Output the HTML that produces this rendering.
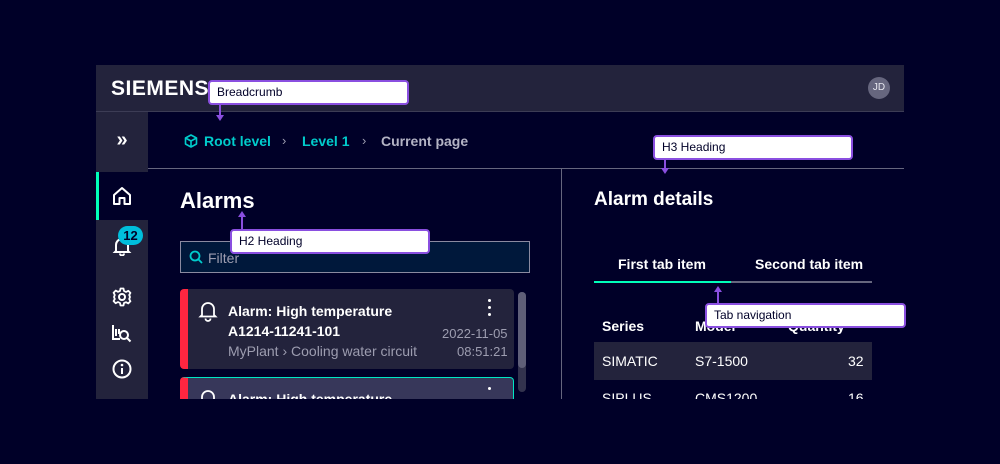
<!DOCTYPE html>
<html><head><meta charset="utf-8"><style>
*{margin:0;padding:0;box-sizing:border-box}
body{width:1000px;height:464px;background:#000028;font-family:"Liberation Sans",sans-serif;position:relative;overflow:hidden;color:#fff}
.a{position:absolute}
.hdr{left:96px;top:65px;width:808px;height:47px;background:#23233c;border-bottom:1px solid #3c3c55}
.side{left:96px;top:112px;width:52px;height:287px;background:#23233c}
.main{left:148px;top:112px;width:756px;height:287px;background:#000028;overflow:hidden}
.tip{background:#fff;color:#000028;border:2px solid #8a4fe0;border-radius:4px;font-size:12px;padding:0 7px;line-height:21px;height:25px}
.arr{width:2px;background:#8a4fe0}
.t{font-size:14px}
svg{display:block}
</style></head><body>
<div class="a hdr">
 <div class="a" style="left:15px;top:12px;font-size:21px;font-weight:bold;letter-spacing:0.5px">SIEMENS</div>
 <div class="a" style="left:772px;top:12px;width:22px;height:22px;border-radius:50%;background:#66667e;font-size:10px;text-align:center;line-height:22px;color:#e8e8f0">JD</div>
</div>
<div class="a side">
 <div class="a" style="left:0;top:0;width:52px;height:57px;color:#fff;font-size:20px;text-align:center;line-height:56px;font-weight:bold">»</div>
 <div class="a" style="left:0;top:60px;width:52px;height:48px;background:#000028"><div class="a" style="left:0;top:0;width:3px;height:48px;background:#00ffb9"></div>
  <svg class="a" style="left:16px;top:14px" width="20" height="20" viewBox="0 0 20 20"><path d="M2 9 L10 2 L18 9 V18 H12.5 V12 H7.5 V18 H2 Z" fill="none" stroke="#fff" stroke-width="2" stroke-linejoin="round"/></svg></div>
 <svg class="a" style="left:16px;top:124px" width="20" height="20" viewBox="0 0 20 20"><path d="M4 15 V9 a6 6 0 0 1 12 0 V15 L17 16 H3 Z M8 17.5 a2 2 0 0 0 4 0" fill="none" stroke="#fff" stroke-width="2"/></svg>
 <div class="a" style="left:22px;top:114px;width:25px;height:19px;border-radius:10px;background:#00bedc;color:#000028;font-size:13px;font-weight:bold;text-align:center;line-height:19px">12</div>
 <svg class="a" style="left:16px;top:175px" width="20" height="20" viewBox="0 0 20 20"><circle cx="10" cy="10" r="3" fill="none" stroke="#fff" stroke-width="2"/><path d="M8.5 1.5h3l.5 2.5 2 1 2.3-1.2 2.1 2.1L17.2 8l.8 2-.8 2 1.2 2.3-2.1 2.1L14 15.2l-2 .8-.5 2.5h-3L8 16l-2-1-2.3 1.2-2.1-2.1L2.8 12 2 10l.8-2-1.2-2.3 2.1-2.1L6 4.8l2-.8z" fill="none" stroke="#fff" stroke-width="1.8" stroke-linejoin="round"/></svg>
 <svg class="a" style="left:16px;top:211px" width="20" height="20" viewBox="0 0 20 20"><path d="M1 2v14h7M4 6v7M7 6v5" stroke="#fff" stroke-width="2" fill="none"/><circle cx="12" cy="12" r="4" fill="none" stroke="#fff" stroke-width="2"/><path d="M15 15l3.5 3.5" stroke="#fff" stroke-width="2"/></svg>
 <svg class="a" style="left:16px;top:247px" width="20" height="20" viewBox="0 0 20 20"><circle cx="10" cy="10" r="8.5" fill="none" stroke="#fff" stroke-width="2"/><path d="M10 9v6" stroke="#fff" stroke-width="2"/><circle cx="10" cy="6" r="1.3" fill="#fff"/></svg>
</div>
<div class="a main">
 <svg class="a" style="left:36px;top:22px" width="14" height="14" viewBox="0 0 14 14"><path d="M7 1l5.5 3v6L7 13 1.5 10V4z M1.5 4L7 7l5.5-3 M7 7v6" fill="none" stroke="#00cccc" stroke-width="1.6" stroke-linejoin="round"/></svg>
 <div class="a t" style="left:56px;top:21px;color:#00cccc;font-weight:bold">Root level</div>
 <div class="a" style="left:134px;top:21px;color:#9d9db0;font-size:13px">›</div>
 <div class="a t" style="left:154px;top:21px;color:#00cccc;font-weight:bold">Level 1</div>
 <div class="a" style="left:214px;top:21px;color:#9d9db0;font-size:13px">›</div>
 <div class="a t" style="left:233px;top:21px;color:#b3b3c4;font-weight:bold">Current page</div>
 <div class="a" style="left:0;top:56px;width:756px;height:1px;background:#66667e"></div>
 <div class="a" style="left:413px;top:57px;width:1px;height:230px;background:#66667e"></div>
 <div class="a" style="left:32px;top:76px;font-size:22px;font-weight:bold">Alarms</div>
 <div class="a" style="left:32px;top:129px;width:350px;height:32px;background:#00183b;border:1px solid #8a8aa0"></div>
 <svg class="a" style="left:41px;top:138px" width="14" height="14" viewBox="0 0 14 14"><circle cx="6" cy="6" r="4.5" fill="none" stroke="#00cccc" stroke-width="1.8"/><path d="M9.3 9.3L13 13" stroke="#00cccc" stroke-width="1.8"/></svg>
 <div class="a t" style="left:60px;top:138px;color:#9d9db0">Filter</div>
 <div class="a" style="left:32px;top:177px;width:334px;height:80px;background:#23233c;border-radius:4px;border-left:8px solid #ff2640"></div>
 <svg class="a" style="left:50px;top:188px" width="20" height="22" viewBox="0 0 20 22"><path d="M4 15V9a6 6 0 0 1 12 0v6l1.5 1.5h-15z M7.5 18.5a2.5 2.5 0 0 0 5 0" fill="none" stroke="#fff" stroke-width="1.8"/></svg>
 <div class="a t" style="left:80px;top:191px;font-weight:bold">Alarm: High temperature</div>
 <div class="a t" style="left:80px;top:211px;font-weight:bold">A1214-11241-101</div>
 <div class="a t" style="left:80px;top:231px;color:#9d9db0">MyPlant › Cooling water circuit</div>
 <div class="a" style="left:294px;top:214px;color:#9d9db0;font-size:13px">2022-11-05</div>
 <div class="a" style="left:309px;top:232px;color:#9d9db0;font-size:13px">08:51:21</div>
 <div class="a" style="left:340px;top:187px;width:3px;line-height:0"><div style="width:3px;height:3px;background:#fff;border-radius:50%;margin-bottom:4px"></div><div style="width:3px;height:3px;background:#fff;border-radius:50%;margin-bottom:4px"></div><div style="width:3px;height:3px;background:#fff;border-radius:50%"></div></div>
 <div class="a" style="left:32px;top:265px;width:334px;height:40px;background:#37375a;border-radius:4px;border:1px solid #00e6c3;border-left:8px solid #ff2640"></div>
 <svg class="a" style="left:50px;top:276px" width="20" height="22" viewBox="0 0 20 22"><path d="M4 15V9a6 6 0 0 1 12 0v6" fill="none" stroke="#fff" stroke-width="1.8"/></svg>
 <div class="a t" style="left:80px;top:279px;font-weight:bold">Alarm: High temperature</div>
 <div class="a" style="left:340px;top:275px;width:3px;height:3px;background:#fff;border-radius:50%"></div>
 <div class="a" style="left:370px;top:180px;width:8px;height:100px;background:#33334e;border-radius:4px"></div>
 <div class="a" style="left:370px;top:180px;width:8px;height:76px;background:#5f5f78;border-radius:4px"></div>
 <div class="a" style="left:446px;top:77px;font-size:19px;font-weight:bold">Alarm details</div>
 <div class="a t" style="left:470px;top:144px;font-weight:bold">First tab item</div>
 <div class="a t" style="left:607px;top:144px;font-weight:bold">Second tab item</div>
 <div class="a" style="left:446px;top:169px;width:278px;height:2px;background:#66667e"></div>
 <div class="a" style="left:446px;top:169px;width:137px;height:2px;background:#00ffb9"></div>
 <div class="a t" style="left:454px;top:206px;font-weight:bold">Series</div>
 <div class="a t" style="left:547px;top:206px;font-weight:bold">Model</div>
 <div class="a t" style="left:640px;top:206px;font-weight:bold">Quantity</div>
 <div class="a" style="left:446px;top:230px;width:278px;height:38px;background:#23233c"></div>
 <div class="a t" style="left:454px;top:241px">SIMATIC</div>
 <div class="a t" style="left:547px;top:241px">S7-1500</div>
 <div class="a t" style="left:700px;top:241px">32</div>
 <div class="a t" style="left:454px;top:278px">SIPLUS</div>
 <div class="a t" style="left:547px;top:278px">CMS1200</div>
 <div class="a t" style="left:700px;top:278px">16</div>
</div>
<div class="a tip" style="left:208px;top:80px;width:201px">Breadcrumb</div>
<div class="a arr" style="left:219px;top:103px;height:13px"></div>
<svg class="a" style="left:216px;top:115px" width="8" height="6"><path d="M0 0h8L4 6z" fill="#8a4fe0"/></svg>
<div class="a tip" style="left:230px;top:229px;width:200px">H2 Heading</div>
<div class="a arr" style="left:241px;top:216px;height:14px"></div>
<svg class="a" style="left:238px;top:211px" width="8" height="6"><path d="M0 6h8L4 0z" fill="#8a4fe0"/></svg>
<div class="a tip" style="left:653px;top:135px;width:200px">H3 Heading</div>
<div class="a arr" style="left:664px;top:158px;height:11px"></div>
<svg class="a" style="left:661px;top:168px" width="8" height="6"><path d="M0 0h8L4 6z" fill="#8a4fe0"/></svg>
<div class="a tip" style="left:705px;top:303px;width:201px">Tab navigation</div>
<div class="a arr" style="left:717px;top:291px;height:13px"></div>
<svg class="a" style="left:714px;top:286px" width="8" height="6"><path d="M0 6h8L4 0z" fill="#8a4fe0"/></svg>
</body></html>
